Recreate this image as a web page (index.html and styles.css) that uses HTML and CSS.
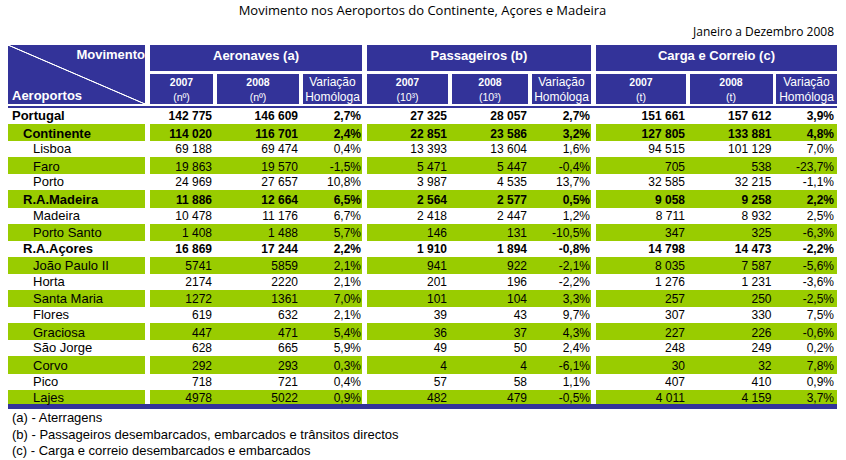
FILE: index.html
```html
<!DOCTYPE html>
<html lang="pt">
<head>
<meta charset="utf-8">
<title>Movimento nos Aeroportos</title>
<link rel="stylesheet" href="styles.css">
</head>
<body>
<div class="page">
  <div class="title">Movimento nos Aeroportos do Continente, Açores e Madeira</div>
  <div class="period">Janeiro a Dezembro 2008</div>

  <div class="thead">
    <div class="corner">
      <div class="c-top">Movimento</div>
      <div class="c-bot">Aeroportos</div>
    </div>
    <div class="grp">
      <div class="grp-title">Aeronaves (a)</div>
      <div class="sub s1">
        <div><b>2007</b><br>(nº)</div>
        <div><b>2008</b><br>(nº)</div>
        <div class="var">Variação<br>Homóloga</div>
      </div>
    </div>
    <div class="grp">
      <div class="grp-title">Passageiros (b)</div>
      <div class="sub s2">
        <div><b>2007</b><br>(10³)</div>
        <div><b>2008</b><br>(10³)</div>
        <div class="var">Variação<br>Homóloga</div>
      </div>
    </div>
    <div class="grp last">
      <div class="grp-title">Carga e Correio (c)</div>
      <div class="sub s3">
        <div><b>2007</b><br>(t)</div>
        <div><b>2008</b><br>(t)</div>
        <div class="var">Variação<br>Homóloga</div>
      </div>
    </div>
  </div>
  <div class="hline"></div>

  <div class="tbody">
    <div class="row b"><div class="lbl l0">Portugal</div><div class="gd s1"><span>142 775</span><span>146 609</span><span>2,7%</span></div><div class="gd s2"><span>27 325</span><span>28 057</span><span>2,7%</span></div><div class="gd s3 last"><span>151 661</span><span>157 612</span><span>3,9%</span></div></div>
    <div class="row g b"><div class="lbl l1">Continente</div><div class="gd s1"><span>114 020</span><span>116 701</span><span>2,4%</span></div><div class="gd s2"><span>22 851</span><span>23 586</span><span>3,2%</span></div><div class="gd s3 last"><span>127 805</span><span>133 881</span><span>4,8%</span></div></div>
    <div class="row"><div class="lbl l2">Lisboa</div><div class="gd s1"><span>69 188</span><span>69 474</span><span>0,4%</span></div><div class="gd s2"><span>13 393</span><span>13 604</span><span>1,6%</span></div><div class="gd s3 last"><span>94 515</span><span>101 129</span><span>7,0%</span></div></div>
    <div class="row g"><div class="lbl l2">Faro</div><div class="gd s1"><span>19 863</span><span>19 570</span><span>-1,5%</span></div><div class="gd s2"><span>5 471</span><span>5 447</span><span>-0,4%</span></div><div class="gd s3 last"><span>705</span><span>538</span><span>-23,7%</span></div></div>
    <div class="row"><div class="lbl l2">Porto</div><div class="gd s1"><span>24 969</span><span>27 657</span><span>10,8%</span></div><div class="gd s2"><span>3 987</span><span>4 535</span><span>13,7%</span></div><div class="gd s3 last"><span>32 585</span><span>32 215</span><span>-1,1%</span></div></div>
    <div class="row g b"><div class="lbl l1">R.A.Madeira</div><div class="gd s1"><span>11 886</span><span>12 664</span><span>6,5%</span></div><div class="gd s2"><span>2 564</span><span>2 577</span><span>0,5%</span></div><div class="gd s3 last"><span>9 058</span><span>9 258</span><span>2,2%</span></div></div>
    <div class="row"><div class="lbl l2">Madeira</div><div class="gd s1"><span>10 478</span><span>11 176</span><span>6,7%</span></div><div class="gd s2"><span>2 418</span><span>2 447</span><span>1,2%</span></div><div class="gd s3 last"><span>8 711</span><span>8 932</span><span>2,5%</span></div></div>
    <div class="row g"><div class="lbl l2">Porto Santo</div><div class="gd s1"><span>1 408</span><span>1 488</span><span>5,7%</span></div><div class="gd s2"><span>146</span><span>131</span><span>-10,5%</span></div><div class="gd s3 last"><span>347</span><span>325</span><span>-6,3%</span></div></div>
    <div class="row b"><div class="lbl l1">R.A.Açores</div><div class="gd s1"><span>16 869</span><span>17 244</span><span>2,2%</span></div><div class="gd s2"><span>1 910</span><span>1 894</span><span>-0,8%</span></div><div class="gd s3 last"><span>14 798</span><span>14 473</span><span>-2,2%</span></div></div>
    <div class="row g"><div class="lbl l2">João Paulo II</div><div class="gd s1"><span>5741</span><span>5859</span><span>2,1%</span></div><div class="gd s2"><span>941</span><span>922</span><span>-2,1%</span></div><div class="gd s3 last"><span>8 035</span><span>7 587</span><span>-5,6%</span></div></div>
    <div class="row"><div class="lbl l2">Horta</div><div class="gd s1"><span>2174</span><span>2220</span><span>2,1%</span></div><div class="gd s2"><span>201</span><span>196</span><span>-2,2%</span></div><div class="gd s3 last"><span>1 276</span><span>1 231</span><span>-3,6%</span></div></div>
    <div class="row g"><div class="lbl l2">Santa Maria</div><div class="gd s1"><span>1272</span><span>1361</span><span>7,0%</span></div><div class="gd s2"><span>101</span><span>104</span><span>3,3%</span></div><div class="gd s3 last"><span>257</span><span>250</span><span>-2,5%</span></div></div>
    <div class="row"><div class="lbl l2">Flores</div><div class="gd s1"><span>619</span><span>632</span><span>2,1%</span></div><div class="gd s2"><span>39</span><span>43</span><span>9,7%</span></div><div class="gd s3 last"><span>307</span><span>330</span><span>7,5%</span></div></div>
    <div class="row g"><div class="lbl l2">Graciosa</div><div class="gd s1"><span>447</span><span>471</span><span>5,4%</span></div><div class="gd s2"><span>36</span><span>37</span><span>4,3%</span></div><div class="gd s3 last"><span>227</span><span>226</span><span>-0,6%</span></div></div>
    <div class="row"><div class="lbl l2">São Jorge</div><div class="gd s1"><span>628</span><span>665</span><span>5,9%</span></div><div class="gd s2"><span>49</span><span>50</span><span>2,4%</span></div><div class="gd s3 last"><span>248</span><span>249</span><span>0,2%</span></div></div>
    <div class="row g"><div class="lbl l2">Corvo</div><div class="gd s1"><span>292</span><span>293</span><span>0,3%</span></div><div class="gd s2"><span>4</span><span>4</span><span>-6,1%</span></div><div class="gd s3 last"><span>30</span><span>32</span><span>7,8%</span></div></div>
    <div class="row"><div class="lbl l2">Pico</div><div class="gd s1"><span>718</span><span>721</span><span>0,4%</span></div><div class="gd s2"><span>57</span><span>58</span><span>1,1%</span></div><div class="gd s3 last"><span>407</span><span>410</span><span>0,9%</span></div></div>
    <div class="row g end"><div class="lbl l2">Lajes</div><div class="gd s1"><span>4978</span><span>5022</span><span>0,9%</span></div><div class="gd s2"><span>482</span><span>479</span><span>-0,5%</span></div><div class="gd s3 last"><span>4 011</span><span>4 159</span><span>3,7%</span></div></div>
  </div>
  <div class="bbar"></div>

  <div class="notes">
    <div>(a) - Aterragens</div>
    <div>(b) - Passageiros desembarcados, embarcados e trânsitos directos</div>
    <div>(c) - Carga e correio desembarcados e embarcados</div>
  </div>
</div>
</body>
</html>
```

FILE: styles.css
```css
html, body {
  margin: 0;
  padding: 0;
  background: #ffffff;
}

body {
  font-family: "Liberation Sans", Arial, sans-serif;
  color: #000000;
}

.page {
  width: 829px;
  margin-left: 8px;
}

.title {
  font-family: "Open Sans", "Noto Sans", sans-serif;
  font-size: 13px;
  line-height: 18px;
  text-align: center;
  margin-top: 1px;
}

.period {
  font-family: "Open Sans", "Noto Sans", sans-serif;
  font-size: 12px;
  line-height: 16px;
  text-align: right;
  margin-top: 5px;
  padding-right: 3px;
}

/* ---------- header ---------- */
.thead {
  display: flex;
  height: 59px;
  margin-top: 5px;
}

.corner {
  flex: none;
  width: 137px;
  margin-right: 5px;
  box-sizing: border-box;
  display: flex;
  flex-direction: column;
  justify-content: space-between;
  color: #ffffff;
  font-weight: bold;
  font-size: 13px;
  background: linear-gradient(to top right,
      #333399 calc(50% - 0.9px),
      #ffffff calc(50% - 0.3px),
      #ffffff calc(50% + 0.3px),
      #333399 calc(50% + 0.9px));
}

.c-top {
  text-align: right;
  line-height: 16px;
  padding-top: 1.5px;
}

.c-bot {
  line-height: 13px;
  padding-left: 4px;
  padding-bottom: 2px;
}

.grp {
  display: flex;
  flex-direction: column;
  margin-right: 5px;
}

.grp.last {
  margin-right: 0;
}

.grp-title {
  height: 26px;
  box-sizing: border-box;
  background: #333399;
  color: #ffffff;
  font-weight: bold;
  font-size: 13px;
  line-height: 21px;
  text-align: center;
  margin-bottom: 3px;
}

.s1 { grid-template-columns: 63px 82px 59px; column-gap: 4px; }
.s2 { grid-template-columns: 81px 76px 59px; column-gap: 4px; }
.s3 { grid-template-columns: 90px 83px 61px; column-gap: 3.5px; }

.sub {
  display: grid;
  height: 30px;
}

.sub > div {
  background: #333399;
  color: #ffffff;
  font-size: 10.5px;
  line-height: 15.5px;
  padding-top: 0.5px;
  height: 30px;
  box-sizing: border-box;
  text-align: center;
  white-space: nowrap;
  overflow: visible;
}

.sub > div.var {
  font-size: 12px;
}

.hline {
  height: 2px;
  margin-top: 2px;
  background: #333399;
}

/* ---------- body ---------- */
.row {
  display: flex;
  height: 16px;
  line-height: 16px;
}

.row.g {
  height: 17.2px;
}

.row.g.end {
  height: 14.6px;
}

.row > div {
  box-sizing: border-box;
  height: 100%;
}

.row.g > div {
  background: #99cc00;
  padding-top: 1.5px;
}

.row.g.end > div {
  padding-top: 0;
}

.row.b {
  font-weight: bold;
}

.lbl {
  flex: none;
  width: 137px;
  margin-right: 5px;
  font-size: 13px;
  white-space: nowrap;
}

.l0 { padding-left: 4px; }
.l1 { padding-left: 15px; }
.l2 { padding-left: 25px; }

.gd {
  display: grid;
  margin-right: 5px;
}

.gd.last {
  margin-right: 0;
}

.gd > span {
  font-size: 12px;
  text-align: right;
  padding-right: 1px;
  white-space: nowrap;
}

.gd.s3 > span:last-child {
  padding-right: 3px;
}

.bbar {
  height: 4.6px;
  background: #333399;
}

/* ---------- notes ---------- */
.notes {
  margin-top: 1.8px;
  padding-left: 4px;
  font-size: 13px;
  line-height: 16.5px;
}
```
